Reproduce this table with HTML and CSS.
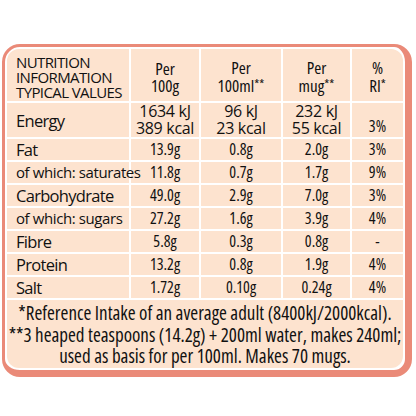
FILE: index.html
```html
<!DOCTYPE html>
<html lang="en">
<head>
    <meta charset="UTF-8">
    <meta name="viewport" content="width=device-width, initial-scale=1.0">
    <title>Nutrition Information</title>
    <link rel="stylesheet" href="styles.css">
</head>
<body>
    <div class="panel">
        <table class="nutrition">
            <colgroup>
                <col class="col-label">
                <col class="col-100g">
                <col class="col-100ml">
                <col class="col-mug">
                <col class="col-ri">
            </colgroup>
            <thead>
                <tr class="head-row">
                    <th class="label title">NUTRITION<br>INFORMATION<br>TYPICAL VALUES</th>
                    <th>Per<br>100g</th>
                    <th>Per<br>100ml<span class="star">**</span></th>
                    <th>Per<br>mug<span class="star">**</span></th>
                    <th>%<br>RI<span class="star">*</span></th>
                </tr>
            </thead>
            <tbody>
                <tr class="energy-row">
                    <td class="label">Energy</td>
                    <td>1634 kJ<br>389 kcal</td>
                    <td>96 kJ<br>23 kcal</td>
                    <td>232 kJ<br>55 kcal</td>
                    <td class="low">3%</td>
                </tr>
                <tr>
                    <td class="label">Fat</td>
                    <td>13.9g</td>
                    <td>0.8g</td>
                    <td>2.0g</td>
                    <td>3%</td>
                </tr>
                <tr>
                    <td class="label sub">of which: saturates</td>
                    <td>11.8g</td>
                    <td>0.7g</td>
                    <td>1.7g</td>
                    <td>9%</td>
                </tr>
                <tr>
                    <td class="label">Carbohydrate</td>
                    <td>49.0g</td>
                    <td>2.9g</td>
                    <td>7.0g</td>
                    <td>3%</td>
                </tr>
                <tr>
                    <td class="label sub">of which: sugars</td>
                    <td>27.2g</td>
                    <td>1.6g</td>
                    <td>3.9g</td>
                    <td>4%</td>
                </tr>
                <tr>
                    <td class="label">Fibre</td>
                    <td>5.8g</td>
                    <td>0.3g</td>
                    <td>0.8g</td>
                    <td>-</td>
                </tr>
                <tr>
                    <td class="label">Protein</td>
                    <td>13.2g</td>
                    <td>0.8g</td>
                    <td>1.9g</td>
                    <td>4%</td>
                </tr>
                <tr>
                    <td class="label">Salt</td>
                    <td>1.72g</td>
                    <td>0.10g</td>
                    <td>0.24g</td>
                    <td>4%</td>
                </tr>
                <tr class="notes-row">
                    <td colspan="5" class="notes">
                        *Reference Intake of an average adult (8400kJ/2000kcal).<br>
                        **3 heaped teaspoons (14.2g) + 200ml water, makes 240ml;<br>
                        used as basis for per 100ml. Makes 70 mugs.
                    </td>
                </tr>
            </tbody>
        </table>
    </div>
</body>
</html>
```

FILE: styles.css
```css
* {
    margin: 0;
    padding: 0;
    box-sizing: border-box;
}

body {
    font-family: 'Open Sans', 'DejaVu Sans Condensed', sans-serif;
    font-stretch: 75%;
    background-color: #fff;
    color: #111;
}

.panel {
    width: 410px;
    margin: 44px 0 0 2px;
    background-color: #fff;
    border: solid #ea8a78;
    border-width: 3px 7px 7px 3px;
    border-radius: 18px;
}

.nutrition {
    width: 400px;
    border-collapse: separate;
    border-spacing: 2px;
    table-layout: fixed;
}

.col-label { width: 122px; }
.col-100g { width: 68px; }
.col-100ml { width: 80px; }
.col-mug { width: 67px; }
.col-ri { width: 51px; }

.nutrition th,
.nutrition td {
    background-color: #fde3cf;
    text-align: center;
    vertical-align: middle;
    font-weight: normal;
    font-size: 16px;
    line-height: 21px;
    height: 21px;
    padding: 0;
    white-space: nowrap;
}

/* row labels use the normal width face, tightened */
.nutrition .label {
    text-align: left;
    padding-left: 9px;
    font-size: 16.5px;
    font-stretch: 100%;
    letter-spacing: -0.7px;
}

.nutrition .label.sub {
    font-size: 15px;
    letter-spacing: -0.4px;
}

/* header row */
.head-row th {
    height: 52px;
    font-size: 17px;
    line-height: 17px;
    padding-top: 3px;
}

.head-row .title {
    font-size: 15px;
    line-height: 15px;
    letter-spacing: -0.6px;
    padding-top: 4px;
    border-top-left-radius: 12px;
}

.head-row th:last-child {
    border-top-right-radius: 12px;
}

.star {
    font-size: 13px;
    vertical-align: 3px;
}

/* energy row */
.energy-row td {
    height: 34px;
    font-size: 16px;
    line-height: 17px;
    font-stretch: 100%;
    letter-spacing: -0.3px;
}

.energy-row .low {
    vertical-align: bottom;
    padding-bottom: 2px;
    font-stretch: 75%;
    letter-spacing: 0;
}

/* footnotes */
.notes-row .notes {
    height: 67px;
    padding-top: 3px;
    font-size: 19px;
    line-height: 21.5px;
    border-radius: 0 0 12px 12px;
}
```
